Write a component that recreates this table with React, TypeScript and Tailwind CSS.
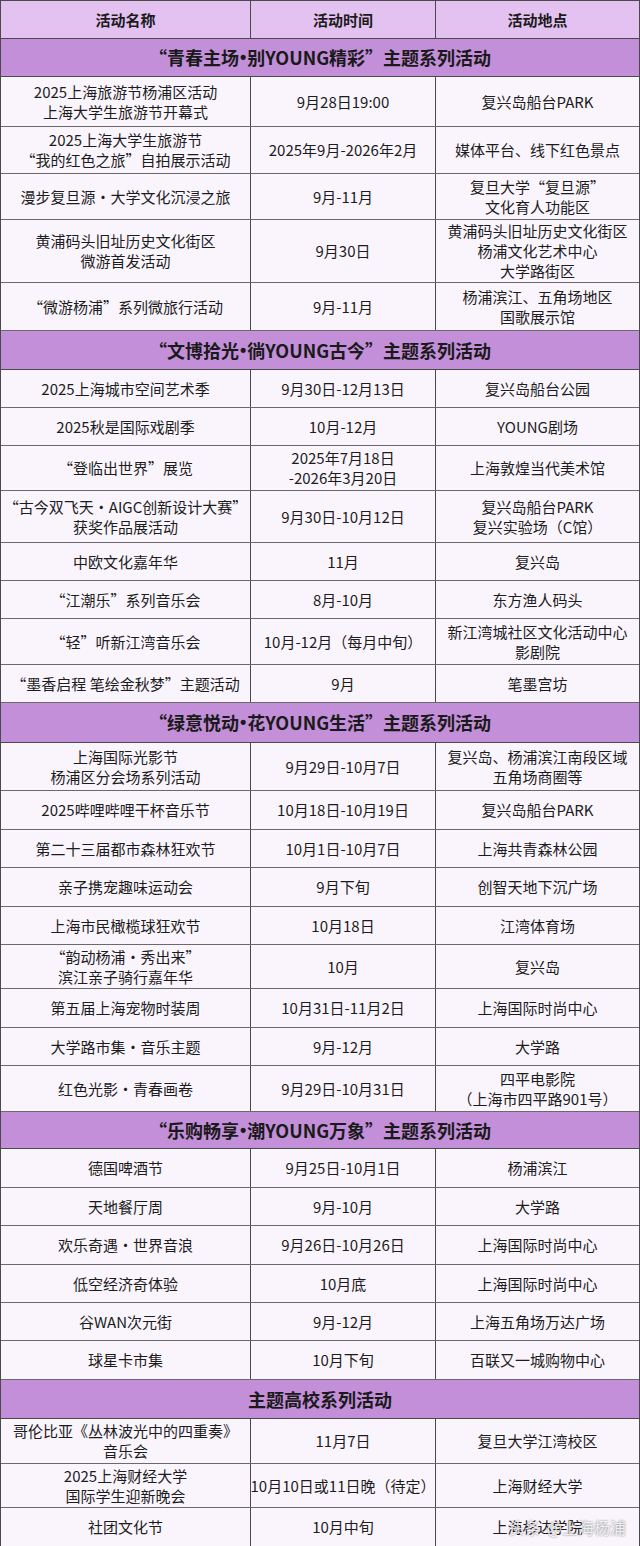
import React from "react";

type Row = { name: string[]; time: string[]; place: string[]; h: number };
type Section = { title: string; h: number; rows: Row[] };

const r = (name: string | string[], time: string | string[], place: string | string[], h: number): Row => ({
  name: Array.isArray(name) ? name : [name],
  time: Array.isArray(time) ? time : [time],
  place: Array.isArray(place) ? place : [place],
  h,
});

const sections: Section[] = [
  {
    title: "“青春主场•别YOUNG精彩”主题系列活动",
    h: 38,
    rows: [
      r(["2025上海旅游节杨浦区活动", "上海大学生旅游节开幕式"], "9月28日19:00", "复兴岛船台PARK", 50),
      r(["2025上海大学生旅游节", "“我的红色之旅”自拍展示活动"], "2025年9月-2026年2月", "媒体平台、线下红色景点", 47),
      r("漫步复旦源·大学文化沉浸之旅", "9月-11月", ["复旦大学“复旦源”", "文化育人功能区"], 46),
      r(["黄浦码头旧址历史文化街区", "微游首发活动"], "9月30日", ["黄浦码头旧址历史文化街区", "杨浦文化艺术中心", "大学路街区"], 63),
      r("“微游杨浦”系列微旅行活动", "9月-11月", ["杨浦滨江、五角场地区", "国歌展示馆"], 48),
    ],
  },
  {
    title: "“文博拾光•徜YOUNG古今”主题系列活动",
    h: 39,
    rows: [
      r("2025上海城市空间艺术季", "9月30日-12月13日", "复兴岛船台公园", 38),
      r("2025秋是国际戏剧季", "10月-12月", "YOUNG剧场", 38),
      r("“登临出世界”展览", ["2025年7月18日", "-2026年3月20日"], "上海敦煌当代美术馆", 45),
      r(["“古今双飞天·AIGC创新设计大赛”", "获奖作品展活动"], "9月30日-10月12日", ["复兴岛船台PARK", "复兴实验场（C馆）"], 52),
      r("中欧文化嘉年华", "11月", "复兴岛", 38),
      r("“江潮乐”系列音乐会", "8月-10月", "东方渔人码头", 38),
      r("“轻”听新江湾音乐会", "10月-12月（每月中旬）", ["新江湾城社区文化活动中心", "影剧院"], 46),
      r("“墨香启程 笔绘金秋梦”主题活动", "9月", "笔墨宫坊", 38),
    ],
  },
  {
    title: "“绿意悦动•花YOUNG生活”主题系列活动",
    h: 40,
    rows: [
      r(["上海国际光影节", "杨浦区分会场系列活动"], "9月29日-10月7日", ["复兴岛、杨浦滨江南段区域", "五角场商圈等"], 48),
      r("2025哔哩哔哩干杯音乐节", "10月18日-10月19日", "复兴岛船台PARK", 39),
      r("第二十三届都市森林狂欢节", "10月1日-10月7日", "上海共青森林公园", 38),
      r("亲子携宠趣味运动会", "9月下旬", "创智天地下沉广场", 39),
      r("上海市民橄榄球狂欢节", "10月18日", "江湾体育场", 38),
      r(["“韵动杨浦·秀出来”", "滨江亲子骑行嘉年华"], "10月", "复兴岛", 44),
      r("第五届上海宠物时装周", "10月31日-11月2日", "上海国际时尚中心", 39),
      r("大学路市集·音乐主题", "9月-12月", "大学路", 38),
      r("红色光影·青春画卷", "9月29日-10月31日", ["四平电影院", "（上海市四平路901号）"], 46),
    ],
  },
  {
    title: "“乐购畅享•潮YOUNG万象”主题系列活动",
    h: 37,
    rows: [
      r("德国啤酒节", "9月25日-10月1日", "杨浦滨江", 39),
      r("天地餐厅周", "9月-10月", "大学路", 38),
      r("欢乐奇遇·世界音浪", "9月26日-10月26日", "上海国际时尚中心", 39),
      r("低空经济奇体验", "10月底", "上海国际时尚中心", 38),
      r("谷WAN次元街", "9月-12月", "上海五角场万达广场", 38),
      r("球星卡市集", "10月下旬", "百联又一城购物中心", 39),
    ],
  },
  {
    title: "主题高校系列活动",
    h: 39,
    rows: [
      r(["哥伦比亚《丛林波光中的四重奏》", "音乐会"], "11月7日", "复旦大学江湾校区", 45),
      r(["2025上海财经大学", "国际学生迎新晚会"], "10月10日或11日晚（待定）", "上海财经大学", 44),
      r("社团文化节", "10月中旬", "上海杉达学院", 39),
    ],
  },
];

function Cell({ lines, last }: { lines: string[]; last?: boolean }) {
  return (
    <div
      className={`flex flex-col items-center justify-center text-center leading-[20px] ${
        last ? "" : "border-r border-[#4a4a4a]"
      }`}
    >
      {lines.map((l, i) => (
        <span key={i} className="whitespace-nowrap">
          {l}
        </span>
      ))}
    </div>
  );
}

function Title({ text }: { text: string }) {
  const parts = text.split("•");
  return (
    <>
      {parts.map((p, i) => (
        <React.Fragment key={i}>
          {i > 0 && <span className="font-['Liberation_Sans'] mx-[1px]">•</span>}
          {p}
        </React.Fragment>
      ))}
    </>
  );
}

export default function App() {
  return (
    <div
      className="w-[640px] bg-[#faf5fc] text-[15px] text-[#1c1c1c] relative"
      style={{ fontFamily: '"Noto Sans CJK SC", "Noto Sans", sans-serif' }}
    >
      <div className="border-x border-t border-[#4a4a4a]">
        {/* header */}
        <div className="grid grid-cols-[250px_185px_1fr] h-[38px] bg-[#e3c1f1] border-b border-[#4a4a4a] font-bold">
          <Cell lines={["活动名称"]} />
          <Cell lines={["活动时间"]} />
          <Cell lines={["活动地点"]} last />
        </div>

        {sections.map((s) => (
          <div key={s.title}>
            <div
              className="flex items-center justify-center bg-[#c28fd8] border-b border-[#4a4a4a] text-[18px] font-bold text-[#1a1a1a]"
              style={{ height: s.h }}
            >
              <Title text={s.title} />
            </div>
            {s.rows.map((row, i) => (
              <div
                key={i}
                className="grid grid-cols-[250px_185px_1fr] border-b border-[#6a6a6a]"
                style={{ height: row.h }}
              >
                <Cell lines={row.name} />
                <Cell lines={row.time} />
                <Cell lines={row.place} last />
              </div>
            ))}
          </div>
        ))}
      </div>

      {/* watermark */}
      <div className="absolute right-[14px] bottom-[8px] flex items-center gap-[6px] text-[16px] text-white/85 [text-shadow:0_0_2px_rgba(0,0,0,0.6)]">
        <span>头条</span>
        <span>@上海杨浦</span>
      </div>
    </div>
  );
}
